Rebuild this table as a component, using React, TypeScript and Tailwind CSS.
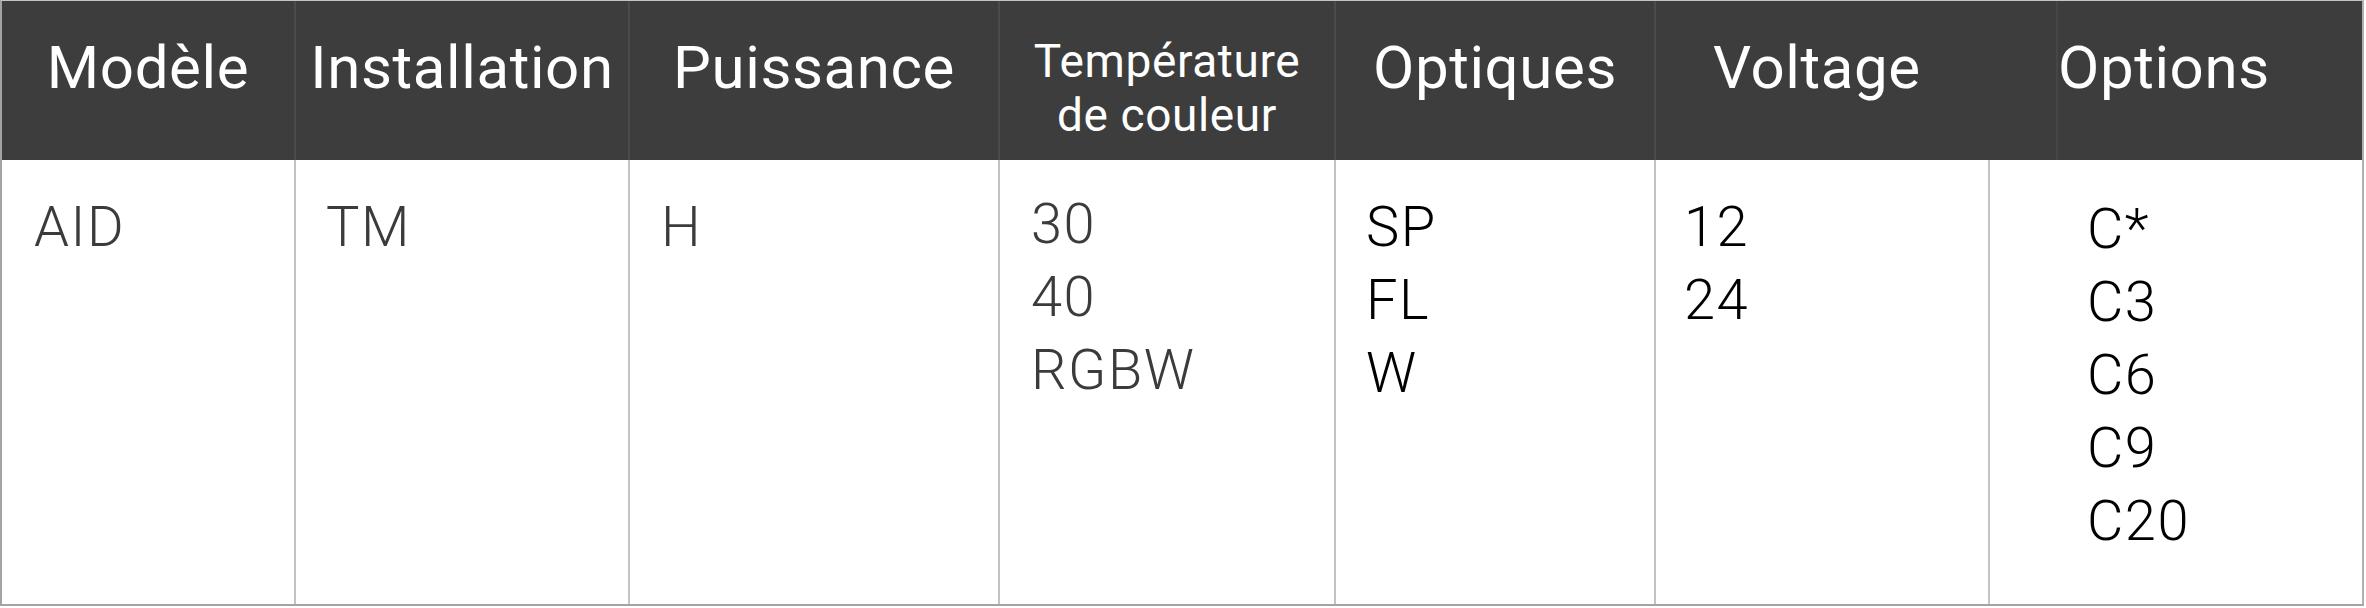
import React from "react";

const font = { fontFamily: "Roboto, 'Noto Sans', sans-serif" };

export default function App() {
  return (
    <div className="bg-white w-[2366px] h-[608px]" style={font}>
      <div className="w-[2364px] border-l-2 border-r-2 border-b-2 border-t border-l-[#a3a3a3] border-r-[#b0b0b0] border-b-[#a3a3a3] border-t-[#c4c4c4]">
        {/* header */}
        <div className="flex h-[159px] bg-[#3c3d3c] text-white tracking-[0.6px]">
          <div className="w-[294px] border-r-2 border-[#4a4b4a] pt-[31px] text-center text-[60px] leading-[72px]">Modèle</div>
          <div className="w-[334px] border-r-2 border-[#4a4b4a] pt-[31px] text-center text-[60px] leading-[72px]">Installation</div>
          <div className="w-[370px] border-r-2 border-[#4a4b4a] pt-[31px] text-center text-[60px] leading-[72px]">Puissance</div>
          <div className="w-[336px] border-r-2 border-[#4a4b4a] pt-[33px] text-center text-[46px] leading-[54px]">
            <div>Température</div>
            <div>de couleur</div>
          </div>
          <div className="w-[320px] border-r-2 border-[#4a4b4a] pt-[31px] text-center text-[60px] leading-[72px]">Optiques</div>
          <div className="w-[402px] border-r-2 border-[#454645] pt-[31px] pl-[57px] text-left text-[60px] leading-[72px]">Voltage</div>
          <div className="w-[304px] pt-[31px] text-left text-[60px] leading-[72px]">Options</div>
        </div>
        {/* body */}
        <div className="flex h-[444px] text-[56px] leading-[73px] font-light tracking-[1.5px]">
          <div className="w-[294px] border-r-2 border-[#c3c3c3] pl-[32px] pt-[31px] text-[#3b3b3b]">AID</div>
          <div className="w-[334px] border-r-2 border-[#c3c3c3] pl-[30px] pt-[31px] text-[#3b3b3b]">TM</div>
          <div className="w-[370px] border-r-2 border-[#c3c3c3] pl-[31px] pt-[31px] text-[#3b3b3b]">H</div>
          <div className="w-[336px] border-r-2 border-[#c3c3c3] pl-[31px] pt-[28px] text-[#3b3b3b]">
            <div>30</div>
            <div>40</div>
            <div>RGBW</div>
          </div>
          <div className="w-[320px] border-r-2 border-[#c3c3c3] pl-[30px] pt-[31px] text-black">
            <div>SP</div>
            <div>FL</div>
            <div>W</div>
          </div>
          <div className="w-[334px] border-r-2 border-[#c3c3c3] pl-[28px] pt-[31px] text-black">
            <div>12</div>
            <div>24</div>
          </div>
          <div className="w-[372px] pl-[97px] pt-[33px] text-black">
            <div>C*</div>
            <div>C3</div>
            <div>C6</div>
            <div>C9</div>
            <div>C20</div>
          </div>
        </div>
      </div>
    </div>
  );
}
